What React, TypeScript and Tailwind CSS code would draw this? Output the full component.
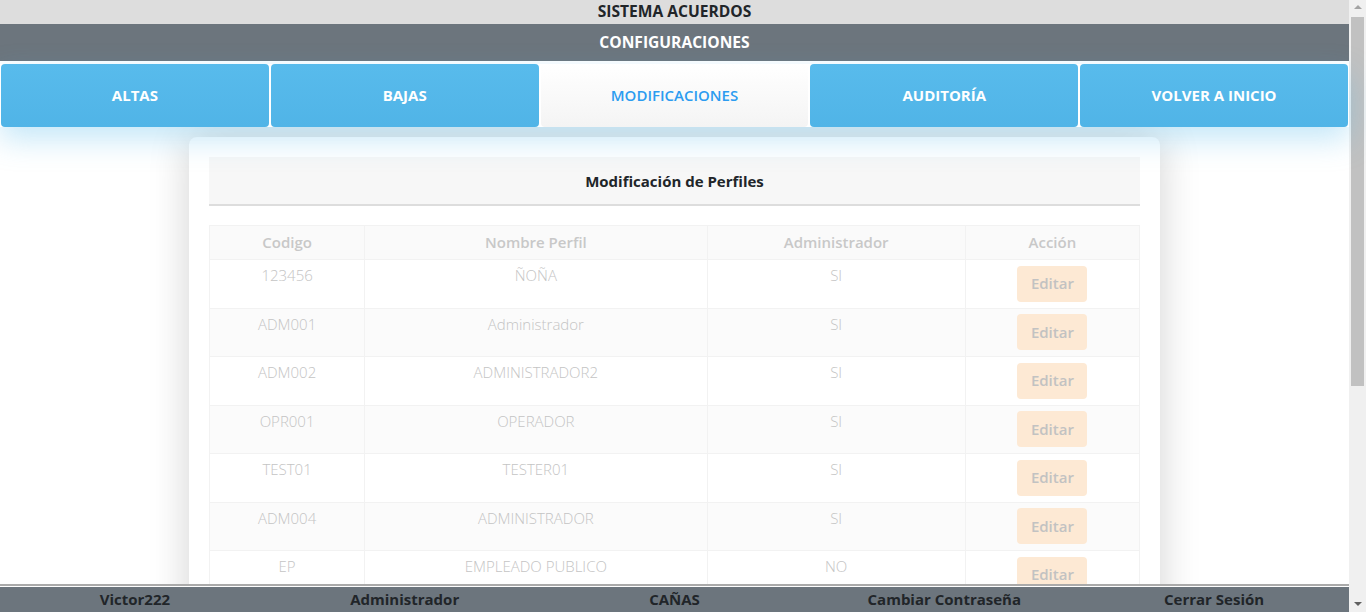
const tabs = [
  { label: 'ALTAS', active: false },
  { label: 'BAJAS', active: false },
  { label: 'MODIFICACIONES', active: true },
  { label: 'AUDITORÍA', active: false },
  { label: 'VOLVER A INICIO', active: false },
]

const perfiles = [
  { codigo: '123456', nombre: 'ÑOÑA', admin: 'SI' },
  { codigo: 'ADM001', nombre: 'Administrador', admin: 'SI' },
  { codigo: 'ADM002', nombre: 'ADMINISTRADOR2', admin: 'SI' },
  { codigo: 'OPR001', nombre: 'OPERADOR', admin: 'SI' },
  { codigo: 'TEST01', nombre: 'TESTER01', admin: 'SI' },
  { codigo: 'ADM004', nombre: 'ADMINISTRADOR', admin: 'SI' },
  { codigo: 'EP', nombre: 'EMPLEADO PUBLICO', admin: 'NO' },
  { codigo: 'INV01', nombre: 'INVITADO', admin: 'NO' },
]

const footerItems = ['Victor222', 'Administrador', 'CAÑAS', 'Cambiar Contraseña', 'Cerrar Sesión']

export default function App() {
  return (
    <div className="flex h-[612px] w-[1366px] overflow-hidden bg-white font-['Open_Sans',sans-serif]">
      <div className="flex w-[1349px] flex-col">
        {/* Top bars */}
        <div className="flex h-6 items-center justify-center bg-[#dddddd] text-[15.6px] font-bold text-[#212529]">
          SISTEMA ACUERDOS
        </div>
        <div className="flex h-[37px] items-center justify-center bg-[#6c757d] text-[15.6px] font-bold text-white">
          CONFIGURACIONES
        </div>

        {/* Tabs */}
        <div className="relative z-10 mt-[3px] grid h-[63px] grid-cols-5 gap-[2px] px-px shadow-[0_12px_30px_rgba(86,185,234,0.35)]">
          {tabs.map(t => (
            <button
              key={t.label}
              className={
                t.active
                  ? 'flex items-center justify-center rounded-[4px] bg-gradient-to-b from-white to-[#f4f4f4] text-[15px] font-semibold text-[#2c9cf0]'
                  : 'flex items-center justify-center rounded-[4px] bg-gradient-to-b from-[#58bbec] to-[#50b4e7] text-[15px] font-bold text-white'
              }
            >
              {t.label}
            </button>
          ))}
        </div>

        {/* Content */}
        <div className="flex-1 overflow-hidden pt-[10px]">
          <div className="mx-auto w-[971px] rounded-lg bg-white p-5 shadow-[0_0_40px_rgba(0,0,0,0.18)]">
            <div className="flex h-[49px] items-center justify-center border-b-2 border-[#dddddd] bg-[#f7f7f7] pt-px text-[15px] font-bold text-[#212529]">
              Modificación de Perfiles
            </div>

            <table className="mt-[19px] w-full table-fixed border-collapse text-[15px]">
              <colgroup>
                <col className="w-[155px]" />
                <col className="w-[342px]" />
                <col className="w-[258px]" />
                <col className="w-[174px]" />
              </colgroup>
              <thead>
                <tr className="h-[34px] bg-[#fafafa] text-[#c8c8c8]">
                  <th className="border border-[#f2f2f2] font-semibold">Codigo</th>
                  <th className="border border-[#f2f2f2] font-semibold">Nombre Perfil</th>
                  <th className="border border-[#f2f2f2] font-semibold">Administrador</th>
                  <th className="border border-[#f2f2f2] font-semibold">Acción</th>
                </tr>
              </thead>
              <tbody>
                {perfiles.map((p, i) => (
                  <tr key={p.codigo} className={i % 2 === 0 ? 'bg-white' : 'bg-[#fbfbfb]'}>
                    <td className="border border-[#f2f2f2] px-2 pt-[4px] text-center align-top font-light text-[#c4c4c4]">{p.codigo}</td>
                    <td className="border border-[#f2f2f2] px-2 pt-[4px] text-center align-top font-light text-[#c4c4c4]">{p.nombre}</td>
                    <td className="border border-[#f2f2f2] px-2 pt-[4px] text-center align-top font-light text-[#c4c4c4]">{p.admin}</td>
                    <td className="border border-[#f2f2f2] pt-[5.5px] pb-[6px] text-center align-top">
                      <button className="h-9 w-[70px] rounded-[4px] bg-[#fde9d4] font-semibold text-[#c2c2c2]">
                        Editar
                      </button>
                    </td>
                  </tr>
                ))}
              </tbody>
            </table>
          </div>
        </div>

        {/* Footer */}
        <div className="grid h-7 grid-cols-5 border-t-2 border-[#aaaaaa] bg-[#6c757d] text-[15px] font-bold text-[#212529]">
          {footerItems.map(f => (
            <div key={f} className="flex items-center justify-center border-t border-white">
              {f}
            </div>
          ))}
        </div>
      </div>

      {/* Scrollbar */}
      <div className="flex w-[17px] flex-col items-center bg-[#f0f0f0]">
        <div className="mt-[5px] h-0 w-0 border-x-4 border-b-4 border-x-transparent border-b-[#a3a3a3]" />
        <div className="mt-[8px] h-[369px] w-[13px] bg-[#c1c1c1]" />
        <div className="flex-1" />
        <div className="mb-[6px] h-0 w-0 border-x-4 border-t-4 border-x-transparent border-t-[#606060]" />
      </div>
    </div>
  )
}
